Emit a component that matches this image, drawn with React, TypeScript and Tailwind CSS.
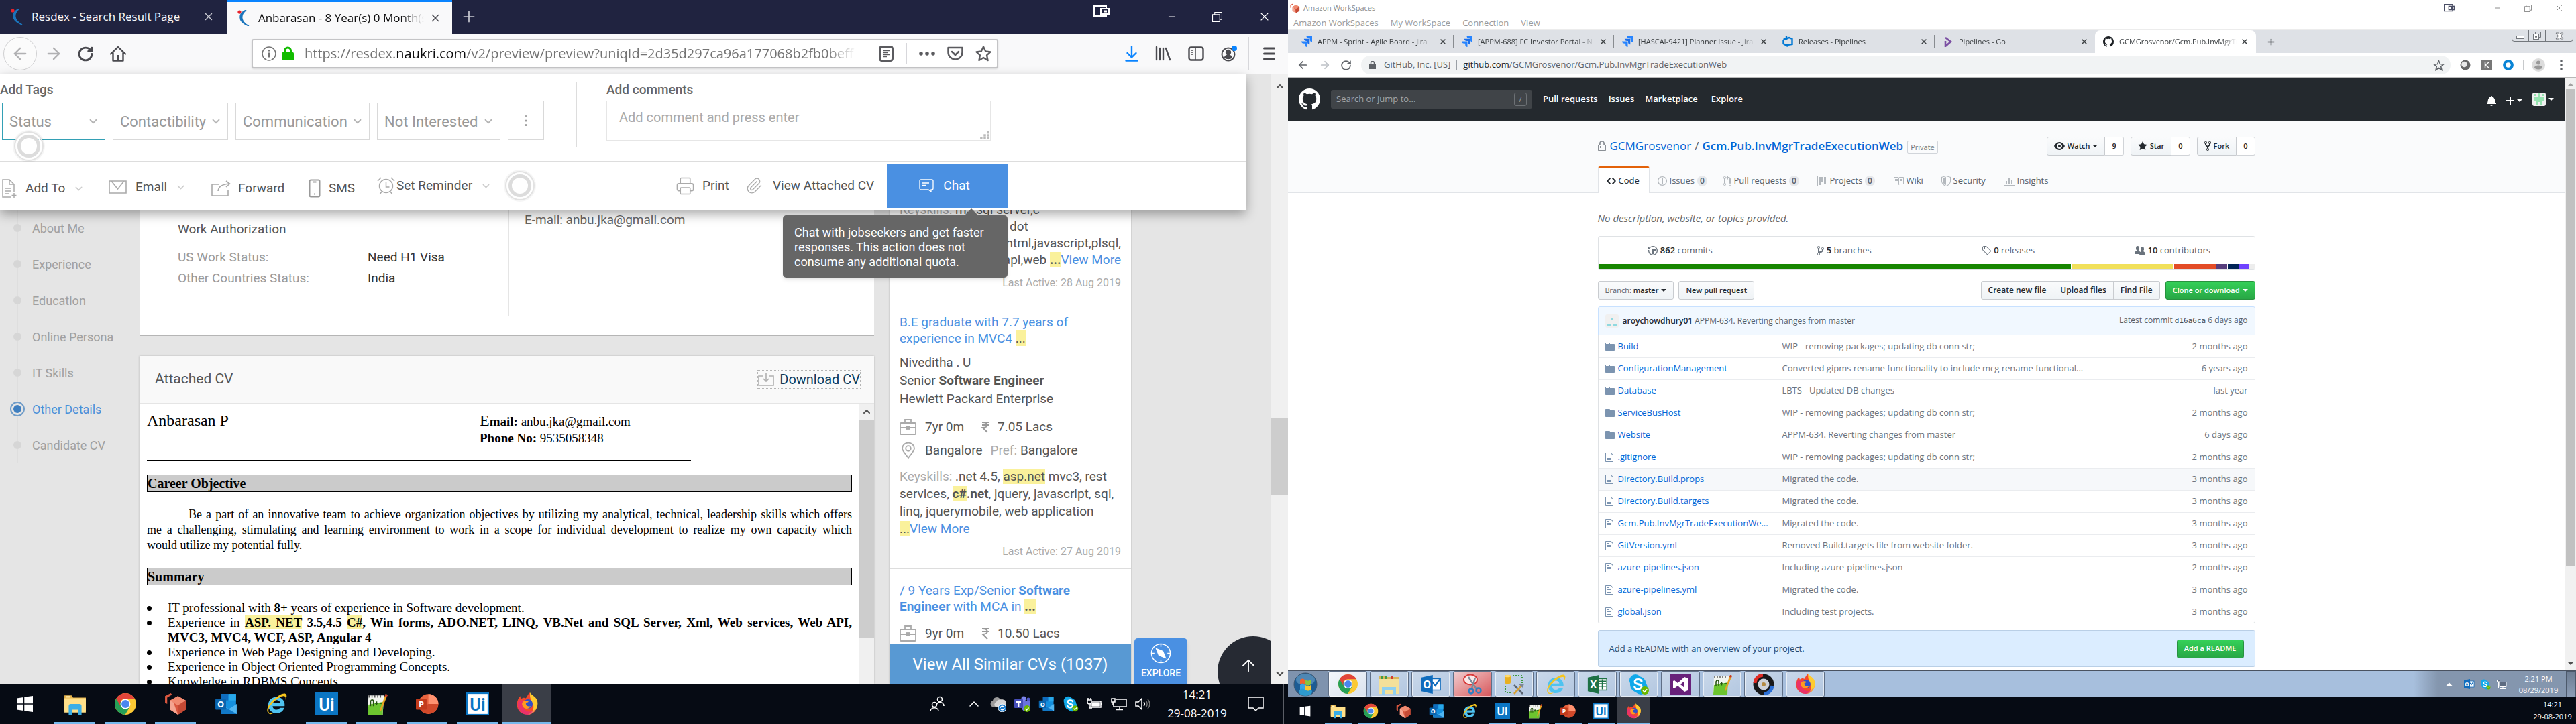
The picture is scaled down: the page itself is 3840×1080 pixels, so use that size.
import type { ReactNode } from "react";
import {
  ArrowLeft,
  ArrowRight,
  ArrowUp,
  ChevronDown,
  ChevronUp,
  Minus,
  MoreVertical,
  Paperclip,
  Plus,
  Printer,
  RotateCw,
  X,
} from "lucide-react";

/* ------------------------------------------------------------------ */
/* Shared drawings                                                     */
/* ------------------------------------------------------------------ */

type IconProps = { className?: string };

function Windows10Logo({ className }: IconProps) {
  return (
    <svg viewBox="0 0 32 32" className={className} fill="#fff" aria-hidden="true">
      <path d="M4 7.500 14 6v9.300H4zM15.300 5.800 28 4v11.300H15.300zM4 16.700h10V26L4 24.500zM15.300 16.700H28V28l-12.700-1.800z" />
    </svg>
  );
}

function ExplorerIcon({ className }: IconProps) {
  return (
    <svg viewBox="0 0 32 32" className={className} aria-hidden="true">
      <path d="M1 4h10l2 3h18v19H1z" fill="#e8b64c" />
      <path d="M1 8h30v20H1z" fill="#ffe08a" />
      <path d="M3 5h6v2H3z" fill="#fff3c0" />
      <path d="M7 31V19a3 3 0 0 1 3-3h12a3 3 0 0 1 3 3v12h-5v-7h-8v7z" fill="#3aaee8" />
    </svg>
  );
}

function ChromeIcon({ className }: IconProps) {
  return (
    <svg viewBox="0 0 32 32" className={className} aria-hidden="true">
      <circle cx="16" cy="16" r="15" fill="#fbc934" />
      <path d="M16 16 3 8.500A15 15 0 0 0 15.500 31l7-11.500z" fill="#26a057" />
      <path d="M3 8.500A15 15 0 0 1 29 8.500H16a7.500 7.500 0 0 0-6.500 11.300z" fill="#e2453a" />
      <circle cx="16" cy="16" r="7" fill="#fff" />
      <circle cx="16" cy="16" r="5.600" fill="#4a86ee" />
    </svg>
  );
}

function WorkspacesIcon({ className }: IconProps) {
  return (
    <svg viewBox="0 0 32 32" className={className} aria-hidden="true">
      <path d="m19 5 11 6v13l-11 7-11-7V11z" fill="#d9573f" />
      <path d="m19 5 11 6-11 7-11-7z" fill="#f08a70" />
      <path d="m19 18 11-7v13l-11 7z" fill="#c54a35" />
      <path d="m8 11 5 3 6 17-11-7z" fill="#f4a591" />
      <path d="M1 5 9 1l2 2-7 4v9l-3-2z" fill="#d9573f" />
    </svg>
  );
}

function OutlookIcon({ className }: IconProps) {
  return (
    <svg viewBox="0 0 32 32" className={className} aria-hidden="true">
      <path d="M9 2h21v26H9z" fill="#1490df" />
      <path d="M9 2h10v9H9z" fill="#0f6cbd" />
      <path d="M20 2h10v9H20z" fill="#28a8ea" />
      <path d="m9 17 11 6 11-7v14H9z" fill="#50b6f2" />
      <path d="m9 17 22 13H9z" fill="#1179c8" />
      <rect x="1" y="9" width="15" height="15" rx="1" fill="#0a64ad" />
      <text x="8.500" y="21" fontSize="12" fontWeight="700" textAnchor="middle" fill="#fff" fontFamily="Open Sans, sans-serif">
        O
      </text>
    </svg>
  );
}

function InternetExplorerIcon({ className }: IconProps) {
  return (
    <svg viewBox="0 0 32 32" className={className} aria-hidden="true">
      <path d="M27.500 19H10.800c.2 3 2.300 5 5.400 5 2.300 0 4-1 4.800-2.500h6C25.600 26.300 21.600 29 16.200 29 9.400 29 4.600 24.200 4.600 17.400 4.600 10.600 9.600 6 16.200 6c6.900 0 11.500 4.700 11.500 11.500zm-6.100-4.300c-.3-2.600-2.300-4.200-5.100-4.200-2.900 0-4.900 1.600-5.400 4.200z" fill="#4fc3f0" />
      <path d="M4 28c-3-4 2-13 9-19C20 3 28-1 30 3c1 2 0 5-1 7 0-3 0-5-3-5C20 5 3 19 5 27c1 3 5 2 8 1-4 3-7 3-9 0z" fill="#f6c51d" />
    </svg>
  );
}

function UiPathIcon({ className, inverse }: IconProps & { inverse?: boolean }) {
  return (
    <svg viewBox="0 0 32 32" className={className} aria-hidden="true">
      <rect x="1" y="1" width="30" height="30" fill={inverse ? "#fff" : "#0b76c4"} stroke="#0b76c4" strokeWidth="2" />
      <text x="16" y="25" fontSize="24" fontWeight="600" textAnchor="middle" fill={inverse ? "#0b76c4" : "#fff"} fontFamily="Roboto, sans-serif">
        Ui
      </text>
    </svg>
  );
}

function NotepadIcon({ className }: IconProps) {
  return (
    <svg viewBox="0 0 32 32" className={className} aria-hidden="true">
      <path d="M4 4h22l-2 27H3z" fill="#f2f5ef" />
      <path d="M4 17 25 13l-1 18H3z" fill="#6cc52f" />
      <path d="M5 3v4M9 3v4M13 3v4M17 3v4M21 3v4" stroke="#555" strokeWidth="1.400" />
      <path d="M7 19v-7c1-3 4-2 4 0v7m2-4h5m-2.500-2.500v5m4-2.500h4" stroke="#24530f" strokeWidth="1.500" fill="none" />
      <path d="m28 2 3 1-9 22-2 2v-3z" fill="#e8a321" />
      <path d="m28 2 3 1-1 3-3-1z" fill="#c2342b" />
    </svg>
  );
}

function PowerPointIcon({ className }: IconProps) {
  return (
    <svg viewBox="0 0 32 32" className={className} aria-hidden="true">
      <circle cx="17.500" cy="16" r="14" fill="#e8643f" />
      <path d="M17.500 2a14 14 0 0 1 14 14h-14z" fill="#ff9270" />
      <path d="M31.500 16a14 14 0 0 1-26.500 6l12.500-6z" fill="#d1492a" />
      <rect x="0" y="9" width="15" height="15" rx="1" fill="#c23b1c" />
      <text x="7.500" y="21" fontSize="12" fontWeight="700" textAnchor="middle" fill="#fff" fontFamily="Open Sans, sans-serif">
        P
      </text>
    </svg>
  );
}

function FirefoxIcon({ className }: IconProps) {
  return (
    <svg viewBox="0 0 32 32" className={className} aria-hidden="true">
      <path d="M16 31C8 31 1.500 25 1.500 17 1.500 12 4 7 6 5l1 4c3-2 5-2 7-1l5-8c2 4 7 5 9.500 10 4.500 10-2 21-12.500 21z" fill="#f5482c" />
      <path d="M20 0c2 4 7 5 9.500 10C33 19 27 30 17 31c7-3 9-9 7-15-2-4-5-8-4-16z" fill="#ffcb2e" />
      <path d="M4 10c-4 8 0 20 12 21 6 0 10-4 11-8-3 5-12 5-15 0-3-4-1-9 2-11-4-2-8 0-10-2z" fill="#e0219a" opacity=".55" />
      <circle cx="17" cy="16" r="6.500" fill="#2f52c9" />
      <path d="M9 14c2-3 6-3 9-1l-4 2c0 4 4 5 7 4-2 4-8 5-11 1-1-2-2-4-1-6z" fill="#ff9a1f" />
    </svg>
  );
}

function SkypeIcon({ className }: IconProps) {
  return (
    <svg viewBox="0 0 32 32" className={className} aria-hidden="true">
      <circle cx="11" cy="10" r="9" fill="#11a9ea" />
      <circle cx="19" cy="21" r="10" fill="#11a9ea" />
      <circle cx="15" cy="16" r="12" fill="#11a9ea" />
      <path d="M20 11c-1-2-3-2.500-5-2.500-3 0-5 1.500-5 3.600 0 5 10 2.400 10 7 0 2.200-2 3.900-5 3.900-2.600 0-4.700-1-5.300-3.400" stroke="#fff" strokeWidth="3" fill="none" strokeLinecap="round" />
      <circle cx="25" cy="25" r="6" fill="#6bb700" />
      <path d="m22 25 2.300 2.300 4-4" stroke="#fff" strokeWidth="1.600" fill="none" />
    </svg>
  );
}

function TriangleDown({ className }: IconProps) {
  return (
    <svg viewBox="0 0 8 4" className={className} fill="currentColor" aria-hidden="true">
      <path d="M0 0h8L4 4z" />
    </svg>
  );
}

function NaukriFavicon({ className }: IconProps) {
  return (
    <svg viewBox="0 0 20 24" className={className} aria-hidden="true">
      <path d="M13 0C4 7 4 17 17 24 9 21 4 17 4 11 4 6 8 2 13 0z" fill="#1b75bc" stroke="#1b75bc" strokeWidth="1.500" />
      <circle cx="3" cy="3" r="2.600" fill="#e8222a" />
    </svg>
  );
}

function TabletModeIcon({ className }: IconProps) {
  return (
    <svg viewBox="0 0 24 18" className={className} fill="none" stroke="currentColor" strokeWidth="2" aria-hidden="true">
      <path d="M19 4V1H1v15h18v-2" />
      <rect x="11" y="5" width="12" height="8" />
      <rect x="16" y="7.500" width="4" height="3" fill="currentColor" stroke="none" />
    </svg>
  );
}

function RestoreIcon({ className }: IconProps) {
  return (
    <svg viewBox="0 0 14 14" className={className} fill="none" stroke="currentColor" aria-hidden="true">
      <path d="M.5 3.500h10v10H.5zM3.500 3.500v-3h10v10h-3" />
    </svg>
  );
}

/* ------------------------------------------------------------------ */
/* Taskbar data shared by both monitors                                */
/* ------------------------------------------------------------------ */

type TaskItem = { label: string; draw: (cls: string) => ReactNode; open: boolean; active?: boolean };

const taskItems: TaskItem[] = [
  { label: "File Explorer", draw: (c) => <ExplorerIcon className={c} />, open: true },
  { label: "Chrome", draw: (c) => <ChromeIcon className={c} />, open: true },
  { label: "WorkSpaces", draw: (c) => <WorkspacesIcon className={c} />, open: true },
  { label: "Outlook", draw: (c) => <OutlookIcon className={c} />, open: false },
  { label: "Internet Explorer", draw: (c) => <InternetExplorerIcon className={c} />, open: false },
  { label: "UiPath Studio", draw: (c) => <UiPathIcon className={c} />, open: true },
  { label: "Notepad++", draw: (c) => <NotepadIcon className={c} />, open: true },
  { label: "PowerPoint", draw: (c) => <PowerPointIcon className={c} />, open: true },
  { label: "UiPath Robot", draw: (c) => <UiPathIcon className={c} inverse />, open: true },
  { label: "Firefox", draw: (c) => <FirefoxIcon className={c} />, open: true, active: true },
];

/* ------------------------------------------------------------------ */
/* Left monitor: Firefox                                               */
/* ------------------------------------------------------------------ */

function FirefoxTitleBar() {
  return (
    <div className="flex h-[50px] shrink-0 items-stretch bg-[#202340] text-[17px] text-[#f9f9fa]">
      <div className="flex w-[338px] items-center pl-4 pr-[18px]">
        <NaukriFavicon className="h-6 w-5" />
        <span className="ml-[11px] flex-1 whitespace-nowrap">Resdex - Search Result Page</span>
        <button aria-label="Close tab"><X className="size-[18px] text-[#c8c9d1]" strokeWidth={2} /></button>
      </div>
      <div className="flex w-[336px] items-center border-t-[3px] border-[#0a84ff] bg-[#f9f9fa] pl-4 pr-4 text-[#0c0c0d]">
        <NaukriFavicon className="h-6 w-5" />
        <span className="ml-[11px] w-[248px] overflow-hidden whitespace-nowrap [mask-image:linear-gradient(to_right,black_86%,transparent)]">
          Anbarasan - 8 Year(s) 0 Month(s)
        </span>
        <button aria-label="Close tab" className="ml-2"><X className="size-[18px] text-[#4a4a4f]" strokeWidth={2} /></button>
      </div>
      <button aria-label="New tab" className="ml-3 self-center"><Plus className="size-[26px] text-[#c8c9d1]" strokeWidth={1.6} /></button>
      <div className="ml-auto flex items-center pr-[25px] text-white">
        <TabletModeIcon className="mb-4 mr-[85px] h-[18px] w-6" />
        <button aria-label="Minimize" className="mr-[52px]"><Minus className="size-4" strokeWidth={1.5} /></button>
        <button aria-label="Restore" className="mr-[53px]"><RestoreIcon className="size-[15px]" /></button>
        <button aria-label="Close"><X className="size-[20px]" strokeWidth={1.3} /></button>
      </div>
    </div>
  );
}

function FirefoxToolbar() {
  return (
    <div className="flex h-[61px] shrink-0 items-center border-b border-[#dcdcde] bg-[#f9f9fa] text-[#4a4a4f]">
      <button aria-label="Back" className="ml-[5px] flex size-[50px] items-center justify-center rounded-full border border-[#cfcfd1] bg-[#fbfbfb]">
        <ArrowLeft className="size-7 text-[#b1b1b3]" strokeWidth={2} />
      </button>
      <button aria-label="Forward" className="ml-[11px]"><ArrowRight className="size-7 text-[#b1b1b3]" strokeWidth={2} /></button>
      <button aria-label="Reload" className="ml-[21px]"><RotateCw className="size-[25px]" strokeWidth={2.8} /></button>
      <button aria-label="Home" className="ml-6">
        <svg viewBox="0 0 24 24" className="size-6" fill="none" stroke="currentColor" strokeWidth="2.400" aria-hidden="true">
          <path d="M1 12.500 12 2l11 10.500M4.500 11v11.500h15V11" strokeLinejoin="round" strokeLinecap="round" />
          <rect x="10" y="14" width="4" height="8" fill="currentColor" stroke="none" />
        </svg>
      </button>
      <div className="ml-[187px] flex h-11 flex-1 items-center rounded-[3px] border-2 border-[#c4c4c6] bg-white pr-2 shadow-sm">
        <svg viewBox="0 0 22 22" className="ml-[13px] size-[22px] shrink-0" fill="none" stroke="#737373" strokeWidth="1.500" aria-hidden="true">
          <circle cx="11" cy="11" r="10" />
          <path d="M11 9.500v7M11 5v2.400" strokeWidth="2.400" />
        </svg>
        <svg viewBox="0 0 18 22" className="ml-2 h-[22px] w-[18px] shrink-0" aria-hidden="true">
          <rect y="9" width="18" height="12" rx="1.500" fill="#12bc00" />
          <path d="M4.500 10V6.500a4.500 4.500 0 0 1 9 0V10" fill="none" stroke="#12bc00" strokeWidth="3" />
        </svg>
        <div role="textbox" aria-label="Address" className="ml-4 w-[822px] overflow-hidden whitespace-nowrap text-[20px] leading-7 text-[#737373] [mask-image:linear-gradient(to_right,black_95%,transparent)]">
          https://resdex.<span className="text-[#0c0c0d]">naukri.com</span>/v2/preview/preview?uniqId=2d35d297ca96a177068b2fb0beff
        </div>
        <div className="ml-auto flex items-center text-[#5b5b5f]">
          <button aria-label="Reader view">
            <svg viewBox="0 0 22 24" className="h-6 w-[22px]" fill="none" stroke="currentColor" aria-hidden="true">
              <rect x="1.500" y="1.500" width="19" height="21" rx="3" strokeWidth="3" />
              <path d="M6 7.500h10M6 10.500h8M6 13.500h10M6 16.500h6" strokeWidth="1.400" />
            </svg>
          </button>
          <span className="ml-[19px] h-8 w-px bg-[#d7d7db]" />
          <svg viewBox="0 0 24 6" className="ml-[18px] h-1.5 w-6" fill="currentColor" aria-hidden="true">
            <circle cx="3" cy="3" r="2.800" /><circle cx="12" cy="3" r="2.800" /><circle cx="21" cy="3" r="2.800" />
          </svg>
          <svg viewBox="0 0 24 22" className="ml-[18px] h-[22px] w-6" fill="none" stroke="currentColor" strokeWidth="2.500" strokeLinecap="round" strokeLinejoin="round" aria-hidden="true">
            <path d="M1.500 2h21v7a10.500 10.500 0 0 1-21 0z" /><path d="m7 8 5 5 5-5" />
          </svg>
          <svg viewBox="0 0 24 24" className="ml-[18px] size-6" fill="none" stroke="currentColor" strokeWidth="2.300" strokeLinejoin="round" aria-hidden="true">
            <path d="m12 1.500 3.200 7 7.300.8-5.500 5 1.600 7.700L12 18l-6.600 4L7 14.300l-5.500-5 7.300-.8z" />
          </svg>
        </div>
      </div>
      <div className="ml-[189px] flex items-center gap-[25px] pr-[19px]">
        <svg viewBox="0 0 20 24" className="h-6 w-5" fill="none" stroke="#0a84ff" strokeWidth="2.400" strokeLinecap="round" aria-hidden="true">
          <path d="M10 1v16M3.500 11l6.500 6.500 6.500-6.500M1.500 22.500h17" />
        </svg>
        <svg viewBox="0 0 24 22" className="h-[22px] w-6" fill="none" stroke="currentColor" strokeWidth="2.400" strokeLinecap="round" aria-hidden="true">
          <path d="M2 1v19M7 3v17M12 3v17M16 3l6 17" />
        </svg>
        <svg viewBox="0 0 24 22" className="h-[22px] w-6" fill="none" stroke="currentColor" strokeWidth="2.400" aria-hidden="true">
          <rect x="1.500" y="1.500" width="21" height="19" rx="3" />
          <path d="M11 2v18M4.500 6h3.500M4.500 9h3.500M4.500 12h3.500" strokeWidth="1.500" />
        </svg>
        <svg viewBox="0 0 24 24" className="size-6" aria-hidden="true">
          <circle cx="11" cy="13" r="9.500" fill="none" stroke="#4a4a4f" strokeWidth="2" />
          <circle cx="11" cy="10" r="4.200" fill="#4a4a4f" />
          <path d="M5 18c0-6 12-6 12 0-3 3-9 3-12 0z" fill="#4a4a4f" />
          <circle cx="20" cy="4" r="4" fill="#0a84ff" />
        </svg>
        <span className="-ml-2 h-[50px] w-px bg-[#d7d7db]" />
        <svg viewBox="0 0 18 20" className="-ml-1 h-5 w-[18px]" stroke="currentColor" strokeWidth="3" strokeLinecap="round" aria-hidden="true">
          <path d="M1.500 2h15M1.500 10h15M1.500 18h15" />
        </svg>
      </div>
    </div>
  );
}

function PulseRing({ className }: IconProps) {
  return (
    <svg viewBox="0 0 50 50" className={className} fill="none" aria-hidden="true">
      <circle cx="25" cy="25" r="24" fill="#000" opacity=".04" />
      <circle cx="25" cy="25" r="21" stroke="#e2e2e2" strokeWidth="2" />
      <circle cx="25" cy="25" r="18.500" stroke="#fff" strokeWidth="2.500" />
      <circle cx="25" cy="25" r="14.500" stroke="#dcdcdc" strokeWidth="5" fill="#fff" />
    </svg>
  );
}

function TagSelect({ label, className }: { label: string; className: string }) {
  return (
    <span className={className}>
      <select aria-label={label} className="h-full w-full appearance-none bg-transparent pl-2.5 text-[22px] text-[#999] outline-none">
        <option>{label}</option>
      </select>
      <ChevronDown className="pointer-events-none absolute right-2 top-1/2 size-[18px] -translate-y-1/2 text-[#b5b5b5]" strokeWidth={2.4} />
    </span>
  );
}

const grip = [
  [12, 0], [6, 5], [12, 5], [0, 10], [6, 10], [12, 10],
];

function CandidateHeader() {
  return (
    <header className="relative z-10 mr-[38px] bg-white shadow-[0_6px_16px_rgba(0,0,0,0.35)]">
      <div className="flex h-[130px] border-b border-[#ddd] pt-[11px]">
        <div>
          <h2 className="text-[19px] font-medium leading-6 text-[#666]">Add Tags</h2>
          <div className="ml-[3px] mt-1 flex items-end gap-[11px]">
            <TagSelect label="Status" className="relative h-14 w-[154px] border border-[#33a0b5]" />
            <TagSelect label="Contactibility" className="relative h-14 w-[172px] border border-[#d9d9d9]" />
            <TagSelect label="Communication" className="relative h-14 w-[200px] border border-[#d9d9d9]" />
            <TagSelect label="Not Interested" className="relative h-14 w-[184px] border border-[#d9d9d9]" />
            <button aria-label="More tags" className="flex h-[59px] w-[54px] items-center justify-center border border-[#d9d9d9]">
              <MoreVertical className="size-[22px] text-[#999]" strokeWidth={1.3} />
            </button>
          </div>
        </div>
        <div className="ml-[47px] h-[98px] w-0.5 bg-[#ddd]" />
        <div className="ml-11">
          <label htmlFor="comments" className="block text-[19px] font-medium leading-6 text-[#666]">Add comments</label>
          <span className="relative mt-1 block h-[60px] w-[573px]">
            <textarea
              id="comments"
              placeholder="Add comment and press enter"
              className="block h-full w-full resize-none overflow-hidden border border-[#e6e6e6] px-[18px] py-3 text-[20px] leading-6 placeholder:text-[#aaa]"
            />
            <svg viewBox="0 0 16 14" className="absolute bottom-0.5 right-0.5 h-3 w-3.5" fill="#bbb" aria-hidden="true">
              {grip.map(([x, y]) => <rect key={x + "-" + y} x={x} y={y} width="4" height="4" />)}
            </svg>
          </span>
        </div>
      </div>
      <PulseRing className="absolute left-[18px] top-[82px] size-[50px]" />
      <div className="flex h-[72px] items-center text-[19px] text-[#555]">
        <button aria-haspopup="menu" className="ml-[3px] flex w-[159px] items-center pt-2">
          <svg viewBox="0 0 22 28" className="h-7 w-[22px]" fill="none" stroke="#aaa" strokeWidth="1.500" aria-hidden="true">
            <path d="M14 27H1V1h10l7 7v12M11 1v7h7M5 14h9M5 18h9M5 22h6M18 21v7M14.500 24.500h7" />
          </svg>
          <span className="ml-[13px]">Add To</span>
          <ChevronDown className="ml-3 size-[17px] text-[#ccc]" />
        </button>
        <button aria-haspopup="menu" className="flex w-[153px] items-center pt-1">
          <svg viewBox="0 0 27 20" className="h-5 w-[27px]" fill="none" stroke="#aaa" strokeWidth="1.600" aria-hidden="true">
            <path d="M1 1h25v18H1zM4 1l9.500 12L23 1" />
          </svg>
          <span className="ml-[13px]">Email</span>
          <ChevronDown className="ml-3 size-[17px] text-[#ccc]" />
        </button>
        <button className="flex w-[145px] items-center pt-2">
          <svg viewBox="0 0 29 24" className="h-6 w-[29px]" fill="none" stroke="#aaa" strokeWidth="1.600" aria-hidden="true">
            <path d="M11 6H1v17h24v-8M10 16c1-7 6-10 17-11M22 1l5.500 4-5.500 5" />
          </svg>
          <span className="ml-[11px]">Forward</span>
        </button>
        <button className="flex w-[102px] items-center pt-2">
          <svg viewBox="0 0 18 28" className="h-7 w-[18px]" fill="none" stroke="#999" strokeWidth="2" aria-hidden="true">
            <rect x="1.500" y="1.500" width="15" height="25" rx="2" /><path d="M6.500 4.500h5M8 22.500h2" />
          </svg>
          <span className="ml-3">SMS</span>
        </button>
        <button aria-haspopup="menu" className="flex w-[188px] items-center">
          <svg viewBox="0 0 27 27" className="size-[27px]" fill="none" stroke="#aaa" strokeWidth="1.500" aria-hidden="true">
            <circle cx="13.500" cy="13.500" r="10" /><path d="M13.500 7v8h5M1 6l5-5M26 6l-5-5M7 22l-3 4M20 22l3 4" />
          </svg>
          <span className="ml-0.5">Set Reminder</span>
          <ChevronDown className="ml-3 size-[17px] text-[#ccc]" />
        </button>
        <PulseRing className="size-[50px]" />
        <button className="ml-auto flex w-[104px] items-center">
          <Printer className="size-[29px] text-[#aaa]" strokeWidth={1.3} />
          <span className="ml-[11px]">Print</span>
        </button>
        <button className="flex w-[211px] items-center">
          <Paperclip className="size-[26px] text-[#aaa]" strokeWidth={1.3} />
          <span className="ml-[15px] whitespace-nowrap">View Attached CV</span>
        </button>
        <div className="relative mr-[355px]">
          <button aria-describedby="chat-tip" className="flex h-[66px] w-[180px] items-center justify-center bg-[#4a90e2] text-white">
            <svg viewBox="0 0 22 20" className="h-5 w-[22px]" fill="none" stroke="currentColor" strokeWidth="1.300" aria-hidden="true">
              <path d="M3 1h16a2 2 0 0 1 2 2v11a2 2 0 0 1-2 2h-1v3l-4-3H3a2 2 0 0 1-2-2V3a2 2 0 0 1 2-2zM5 6h10M5 9.500h6" />
            </svg>
            <span className="ml-[14px] mr-2">Chat</span>
          </button>
          <div id="chat-tip" role="tooltip" className="absolute right-0 top-[77px] w-[335px] rounded-[5px] bg-[#666] px-[17px] pb-3 pt-[15px] text-[18px] leading-[22px] text-white shadow-md">
            <svg viewBox="0 0 20 10" className="absolute -top-2.5 right-11 h-2.5 w-5" fill="#666" aria-hidden="true"><path d="M10 0 20 10H0z" /></svg>
            <p>Chat with jobseekers and get faster responses. This action does not consume any additional quota.</p>
          </div>
        </div>
      </div>
    </header>
  );
}

const sections = ["About Me", "Experience", "Education", "Online Persona", "IT Skills", "Other Details", "Candidate CV"];

function SectionNav() {
  return (
    <nav className="w-52 shrink-0 text-[18px]">
      <ul>
        {sections.map((s) => {
          const active = s === "Other Details";
          return (
            <li key={s} className="flex h-[54px] items-center pl-[15px]">
              <span className="flex h-full w-[22px] flex-col items-center">
                <span className="w-px flex-1 bg-[#dedede]" />
                {active ? (
                  <span className="flex size-[22px] items-center justify-center rounded-full border-2 border-[#6f9cc8]">
                    <span className="size-3 rounded-full bg-[#3f7fc0]" />
                  </span>
                ) : (
                  <span className="size-3 rounded-full bg-[#d6d6d6]" />
                )}
                <span className="w-px flex-1 bg-[#dedede]" />
              </span>
              <a href="#section" className={active ? "ml-[11px] text-[#4a90d9]" : "ml-[11px] text-[#a0a0a0]"}>{s}</a>
            </li>
          );
        })}
      </ul>
    </nav>
  );
}

const Mark = ({ children }: { children: ReactNode }) => <mark className="bg-[#faf19b] text-inherit">{children}</mark>;

function Bullet({ children }: { children: ReactNode }) {
  return (
    <li className="flex">
      <span className="mt-2 h-[7px] w-[7px] shrink-0 rounded-full bg-black" />
      <div className="ml-6 flex-1">{children}</div>
    </li>
  );
}

function AttachedCv() {
  return (
    <section className="mt-[30px] flex min-h-0 flex-1 flex-col bg-white shadow-[0_0_3px_rgba(0,0,0,0.2)]">
      <div className="flex h-[71px] shrink-0 items-center border-b border-[#e5e5e5] bg-[#f9f9f9] pl-[23px] pr-5 text-[21px] text-[#555]">
        <h2>Attached CV</h2>
        <a href="#download" className="ml-auto flex h-7 items-center border border-dotted border-[#b5b5b5] text-[20px] text-[#0b3a5c]">
          <svg viewBox="0 0 24 20" className="mr-2 h-5 w-6" fill="none" stroke="#b0b0b0" strokeWidth="1.600" aria-hidden="true">
            <path d="M7 5H1v14h22V5h-6M12 0v12M8 9l4 4 4-4" />
          </svg>
          Download CV
        </a>
      </div>
      <div className="flex min-h-0 flex-1">
        <article className="min-w-0 flex-1 overflow-hidden px-[11px] pt-[13px] text-[19px] leading-[23px] text-black [font-family:'Liberation_Serif',serif]">
          <div className="flex leading-[25px]">
            <p className="w-[496px] text-[24px]">Anbarasan P</p>
            <div>
              <p className="leading-[25px]"><span className="text-[24px]">E</span><b>mail:</b> anbu.jka@gmail.com</p>
              <p className="leading-[25px]"><b>Phone No:</b> 9535058348</p>
            </div>
          </div>
          <div className="mt-5 h-0.5 w-[811px] bg-black" />
          <h3 className="mt-5 border border-black bg-[#cbcbcb] text-[20px] font-bold leading-6">Career Objective</h3>
          <p className="mt-[22px] text-[18px]">
            <span className="block pl-[62px] [text-align-last:justify]">
              Be a part of an innovative team to achieve organization objectives by utilizing my analytical, technical, leadership skills which offers
            </span>
            <span className="block [text-align-last:justify]">
              me a challenging, stimulating and learning environment to work in a scope for individual development to realize my own capacity which
            </span>
            <span className="block">would utilize my potential fully.</span>
          </p>
          <h3 className="mt-[22px] border border-black bg-[#cbcbcb] text-[20px] font-bold leading-6">Summary</h3>
          <ul className="mt-[23px] text-justify leading-[22px]">
            <Bullet>IT professional with <b>8</b>+ years of experience in Software development.</Bullet>
            <Bullet>
              Experience in <b><Mark>ASP. NET</Mark> 3.5,4.5 <Mark>C#</Mark>, Win forms, ADO.NET, LINQ, VB.Net and SQL Server, Xml, Web services, Web API, MVC3, MVC4, WCF, ASP, Angular 4</b>
            </Bullet>
            <Bullet>Experience in Web Page Designing and Developing.</Bullet>
            <Bullet>Experience in Object Oriented Programming Concepts.</Bullet>
            <Bullet>Knowledge in RDBMS Concepts.</Bullet>
          </ul>
        </article>
        <div className="flex w-[22px] flex-col items-center bg-[#f0f0f0]">
          <ChevronUp className="my-1 size-4 shrink-0 text-[#505050]" strokeWidth={3} />
          <div className="h-[326px] w-full bg-[#cdcdcd]" />
        </div>
      </div>
    </section>
  );
}

function Briefcase() {
  return (
    <svg viewBox="0 0 25 24" className="h-6 w-[25px]" fill="none" stroke="#aaa" strokeWidth="1.800" aria-hidden="true">
      <rect x="1" y="6" width="23" height="17" rx="1" /><path d="M8 6V1h9v5M1 13h23" /><rect x="10" y="11" width="5" height="4" fill="#aaa" />
    </svg>
  );
}

function Rupee() {
  return (
    <svg viewBox="0 0 12 18" className="h-[18px] w-3" fill="none" stroke="#999" strokeWidth="2" aria-hidden="true">
      <path d="M1 2h10M1 6h10M2 2c9 0 9 8 0 8l7 7" />
    </svg>
  );
}

function SimilarProfiles() {
  return (
    <aside className="ml-[23px] flex w-[360px] shrink-0 flex-col bg-white text-[19px] text-[#555] shadow-[0_0_2px_rgba(0,0,0,0.25)]">
      <div className="min-h-0 flex-1 overflow-hidden">
        <section className="-mt-[13px] border-b border-[#ddd] px-[15px] pb-[15px] leading-[25px]">
          <p className="whitespace-nowrap"><span className="text-[#aaa]">Keyskills:</span> ms sql server,c</p>
          <p className="pl-[164px]">dot</p>
          <p className="text-right">html,javascript,plsql,</p>
          <p className="text-right">api,web <Mark><b>...</b></Mark><a href="#more" className="text-[#4a90e2]">View More</a></p>
          <p className="mt-3 text-right text-[16px] leading-5 text-[#aaa]">Last Active: 28 Aug 2019</p>
        </section>
        <section className="border-b border-[#ddd] px-[15px] pb-[15px] pt-[21px]">
          <h3 className="leading-6 text-[#4a90e2]">
            <a href="#profile">B.E graduate with 7.7 years of<br />experience in MVC4 <Mark><span className="text-[#555]">...</span></Mark></a>
          </h3>
          <div className="mt-2.5 leading-[27px]">
            <p>Niveditha . U</p>
            <p>Senior <b>Software Engineer</b></p>
            <p>Hewlett Packard Enterprise</p>
          </div>
          <div className="mt-4 flex h-[26px] items-center">
            <Briefcase /><span className="ml-[13px] w-[84px]">7yr 0m</span><Rupee /><span className="ml-3">7.05 Lacs</span>
          </div>
          <div className="mt-[9px] flex h-[26px] items-center">
            <svg viewBox="0 0 20 24" className="ml-[3px] h-6 w-5" fill="none" stroke="#aaa" strokeWidth="1.800" aria-hidden="true">
              <path d="M10 23C4 15 1 12 1 9a9 8.500 0 0 1 18 0c0 3-3 6-9 14z" /><circle cx="10" cy="9" r="3.800" />
            </svg>
            <span className="ml-[15px]">Bangalore</span><span className="ml-3 text-[#aaa]">Pref:</span><span className="ml-[5px]">Bangalore</span>
          </div>
          <p className="mt-[13px] whitespace-nowrap leading-[26px]">
            <span className="text-[#aaa]">Keyskills:</span> .net 4.5, <Mark>asp.net</Mark> mvc3, rest<br />
            services, <b><Mark>c#</Mark>.net</b>, jquery, javascript, sql,<br />
            linq, jquerymobile, web application<br />
            <Mark>...</Mark><a href="#more" className="text-[#4a90e2]">View More</a>
          </p>
          <p className="mt-[11px] text-right text-[16px] leading-5 text-[#aaa]">Last Active: 27 Aug 2019</p>
        </section>
        <section className="px-[15px] pt-5">
          <h3 className="leading-6 text-[#4a90e2]">
            <a href="#profile">/ 9 Years Exp/Senior <b>Software<br />Engineer</b> with MCA in <Mark><b className="text-[#555]">...</b></Mark></a>
          </h3>
          <div className="mt-[15px] flex h-[26px] items-center">
            <Briefcase /><span className="ml-[13px] w-[84px]">9yr 0m</span><Rupee /><span className="ml-3">10.50 Lacs</span>
          </div>
        </section>
      </div>
      <button className="h-[59px] shrink-0 bg-[#5899d3] text-[24px] text-white">View All Similar CVs (1037)</button>
    </aside>
  );
}

function CandidatePage() {
  return (
    <div className="flex min-h-0 flex-1 bg-[#e5e5e5] [font-family:Roboto,sans-serif]">
      <div className="flex min-w-0 flex-1 flex-col">
        <CandidateHeader />
        <div className="flex min-h-0 flex-1">
          <SectionNav />
          <main className="flex min-w-0 flex-1 flex-col">
            <section className="flex h-[188px] shrink-0 border-b-2 border-[#b5b5b5] bg-white pl-[57px] text-[19px]">
              <div className="h-[158px] w-[494px] border-r-2 border-[#e5e5e5] pt-[17px]">
                <h2 className="leading-6 text-[#555]">Work Authorization</h2>
                <dl className="mt-[14px] grid grid-cols-[283px_1fr] leading-[31px]">
                  <dt className="text-[#999]">US Work Status:</dt>
                  <dd className="text-[#333]">Need H1 Visa</dd>
                  <dt className="text-[#999]">Other Countries Status:</dt>
                  <dd className="text-[#333]">India</dd>
                </dl>
              </div>
              <p className="pl-[23px] pt-[3px] leading-6 text-[#666]">E-mail: anbu.jka@gmail.com</p>
            </section>
            <AttachedCv />
          </main>
          <SimilarProfiles />
          <div className="flex w-[209px] shrink-0 items-end justify-between overflow-hidden pl-[5px]">
            <button className="flex h-[68px] w-[79px] flex-col items-center justify-center rounded-t-[5px] bg-[#4a90e2] text-[14px] font-medium leading-5 text-white shadow-md">
              <svg viewBox="0 0 32 32" className="mb-1 size-[31px]" fill="none" stroke="currentColor" strokeWidth="1.500" aria-hidden="true">
                <circle cx="16" cy="16" r="14.500" />
                <path d="M16 2v4M16 26v4M2 16h4M26 16h4" />
                <path d="m9 9 10 4 4 10-10-4z" fill="currentColor" />
              </svg>
              EXPLORE
            </button>
            <button aria-label="Back to top" className="h-[71px] w-20 overflow-hidden">
              <span className="flex size-[106px] items-center justify-start rounded-full bg-[#262a33] pb-[18px] pl-8">
                <ArrowUp className="size-7 text-white" strokeWidth={1.6} />
              </span>
            </button>
          </div>
        </div>
      </div>
      <div className="flex w-[25px] shrink-0 flex-col items-center bg-[#f0f0f0] py-1.5 text-[#505050]">
        <ChevronUp className="mt-1 size-4" strokeWidth={3} />
        <div className="mt-[486px] h-[116px] w-full bg-[#cdcdcd]" />
        <ChevronDown className="mt-auto size-[18px]" strokeWidth={3} />
      </div>
    </div>
  );
}

function PrimaryTaskbar() {
  return (
    <footer className="flex h-[60px] shrink-0 bg-[#060b14] text-[17px] text-white">
      <button aria-label="Start" className="flex w-[74px] items-center justify-center"><Windows10Logo className="size-[32px]" /></button>
      {taskItems.map((t) => (
        <button key={t.label} aria-label={t.label} className={t.active ? "flex w-[73px] flex-col items-center bg-[#3a3e47]" : "flex w-[75px] flex-col items-center"}>
          <span className="flex flex-1 items-center pt-[3px]">{t.draw("size-[34px]")}</span>
          <span className={t.active ? "h-[3px] w-full bg-[#76b9ed]" : t.open ? "h-[3px] w-[61px] bg-[#76b9ed]" : "h-[3px]"} />
        </button>
      ))}
      <div className="ml-auto flex items-center">
        <svg viewBox="0 0 24 24" className="size-6" fill="none" stroke="#fff" strokeWidth="1.600" aria-hidden="true">
          <circle cx="16" cy="5" r="3.500" /><path d="M11 14c0-6 11-6 11 1" /><circle cx="8" cy="13" r="3.500" /><path d="M2 23c0-7 12-7 12 0" />
        </svg>
        <ChevronUp className="ml-[31px] size-[24px]" strokeWidth={1.5} />
        <svg viewBox="0 0 24 24" className="ml-3 size-6" aria-hidden="true">
          <path d="M3 16a5 5 0 0 1 1-9 6 6 0 0 1 11-2 5 5 0 0 1 6 7v4z" fill="#9a9a9a" />
          <path d="M8 16a4 4 0 0 1 1-7 6 6 0 0 1 8-3 5 5 0 0 1 4 10z" fill="#d6d6d6" />
          <circle cx="18" cy="18" r="6" fill="#1f7fd0" stroke="#fff" />
          <path d="M15 18a3 3 0 0 1 5-2M21 18a3 3 0 0 1-5 2" stroke="#fff" strokeWidth="1.400" fill="none" />
        </svg>
        <svg viewBox="0 0 24 24" className="ml-3 size-6" aria-hidden="true">
          <circle cx="14" cy="4" r="3.500" fill="#7b83eb" /><circle cx="21" cy="5" r="2.500" fill="#5059c9" />
          <path d="M9 8h14v8a6 6 0 0 1-12 2z" fill="#6a72dc" /><rect y="5" width="13" height="13" rx="1" fill="#464eb8" />
          <path d="M3 9h7M6.500 9v7" stroke="#fff" strokeWidth="1.800" /><circle cx="19" cy="19" r="5" fill="#6bb700" /><path d="m16.500 19 2 2 3-3.500" stroke="#fff" fill="none" strokeWidth="1.300" />
        </svg>
        <OutlookIcon className="ml-3 size-6" />
        <SkypeIcon className="ml-3 size-6" />
        <svg viewBox="0 0 24 24" className="ml-3 size-6" fill="none" stroke="#fff" strokeWidth="1.500" aria-hidden="true">
          <path d="M8 8h13v9H6v-5M22 11v3" /><path d="M8 10h11v5H8z" fill="#fff" /><path d="M2 3v3M6 3v3M1 6h6v3a3 3 0 0 1-6 0zM4 12v6h4" />
        </svg>
        <svg viewBox="0 0 24 24" className="ml-3 size-6" fill="none" stroke="#fff" strokeWidth="1.500" aria-hidden="true">
          <path d="M7 5h16v11H4v-5M13 16v4M8 20.500h10" /><path d="M1 4h5v5H1zM3 9v4" />
        </svg>
        <svg viewBox="0 0 24 24" className="ml-3 size-6" fill="none" stroke="#fff" strokeWidth="1.500" aria-hidden="true">
          <path d="M1 9h4l5-5v16l-5-5H1z" /><path d="M13 9a4 4 0 0 1 0 6" /><path d="M16 7a7 7 0 0 1 0 10M19 5a10 10 0 0 1 0 14" stroke="#777" />
        </svg>
        <div className="ml-[21px] w-[95px] whitespace-nowrap text-center leading-7"><p>14:21</p><p>29-08-2019</p></div>
        <svg viewBox="0 0 24 24" className="ml-7 size-6" fill="none" stroke="#fff" strokeWidth="1.500" aria-hidden="true">
          <path d="M1 2h22v16h-7l-4 4-4-4H1z" />
        </svg>
        <span className="ml-[29px] mr-1.5 h-[60px] w-px bg-[#5a5e66]" />
      </div>
    </footer>
  );
}

/* ------------------------------------------------------------------ */
/* Right monitor: remote workspace with Chrome                         */
/* ------------------------------------------------------------------ */

type OctProps = { d: string; w?: number; className?: string };

function Oct({ d, w = 16, className }: OctProps) {
  return (
    <svg viewBox={"0 0 " + w + " 16"} width={w} height={16} className={className} fill="currentColor" fillRule="evenodd" aria-hidden="true">
      <path d={d} />
    </svg>
  );
}

const oct = {
  github: "M8 0C3.58 0 0 3.58 0 8c0 3.54 2.29 6.53 5.47 7.59.4.07.55-.17.55-.38 0-.19-.01-.82-.01-1.49-2.01.37-2.53-.49-2.69-.94-.09-.23-.48-.94-.82-1.13-.28-.15-.68-.52-.01-.53.63-.01 1.08.58 1.23.82.72 1.21 1.87.87 2.33.66.07-.52.28-.87.51-1.07-1.78-.2-3.64-.89-3.64-3.95 0-.87.31-1.59.82-2.15-.08-.2-.36-1.02.08-2.12 0 0 .67-.21 2.2.82.64-.18 1.32-.27 2-.27.68 0 1.36.09 2 .27 1.53-1.04 2.2-.82 2.2-.82.44 1.1.16 1.92.08 2.12.51.56.82 1.27.82 2.15 0 3.07-1.87 3.75-3.65 3.95.29.25.54.73.54 1.48 0 1.07-.01 1.93-.01 2.2 0 .21.15.46.55.38A8.013 8.013 0 0 0 16 8c0-4.42-3.58-8-8-8z",
  file: "M6 5H2V4h4v1zM2 8h7V7H2v1zm0 2h7V9H2v1zm0 2h7v-1H2v1zm10-7.5V14c0 .55-.45 1-1 1H1c-.55 0-1-.45-1-1V2c0-.55.45-1 1-1h7.5L12 4.5zM11 5L8 2H1v12h10V5z",
  dir: "M13 4H7V3c0-.66-.31-1-1-1H1c-.55 0-1 .45-1 1v10c0 .55.45 1 1 1h12c.55 0 1-.45 1-1V5c0-.55-.45-1-1-1zM6 4H1V3h5v1z",
  code: "M9.5 3L8 4.5 11.5 8 8 11.5 9.5 13 14 8 9.5 3zm-5 0L0 8l4.500 5L6 11.5 2.5 8 6 4.5 4.5 3z",
  issue: "M7 2.3c3.14 0 5.7 2.56 5.7 5.7s-2.56 5.7-5.7 5.7A5.71 5.71 0 0 1 1.3 8c0-3.14 2.56-5.7 5.7-5.7zM7 1C3.14 1 0 4.14 0 8s3.14 7 7 7 7-3.14 7-7-3.14-7-7-7zm1 3H6v5h2V4zm0 6H6v2h2v-2z",
  pr: "M11 11.28V5c-.03-.78-.34-1.47-.94-2.06C9.46 2.35 8.78 2.03 8 2H7V0L4 3l3 3V4h1c.27.02.48.11.69.31.21.2.3.42.31.69v6.28A1.993 1.993 0 0 0 10 15a1.993 1.993 0 0 0 1-3.72zm-1 2.92c-.66 0-1.2-.55-1.2-1.2 0-.65.55-1.2 1.2-1.2.65 0 1.2.55 1.2 1.2 0 .65-.55 1.2-1.2 1.2zM4 3c0-1.11-.89-2-2-2a1.993 1.993 0 0 0-1 3.72v6.56A1.993 1.993 0 0 0 2 15a1.993 1.993 0 0 0 1-3.72V4.72c.59-.34 1-.98 1-1.72zm-.8 10c0 .66-.55 1.2-1.2 1.2-.65 0-1.2-.55-1.2-1.2 0-.65.55-1.2 1.2-1.2.65 0 1.2.55 1.2 1.2zM2 4.2C1.34 4.2.8 3.65.8 3c0-.65.55-1.2 1.2-1.2.65 0 1.2.55 1.2 1.2 0 .65-.55 1.2-1.2 1.2z",
  project: "M10 12h3V2h-3v10zm-4-2h3V2H6v8zm-4 4h3V2H2v12zm-1 1h13V1H1v14zM14 0H1a1 1 0 0 0-1 1v14a1 1 0 0 0 1 1h13a1 1 0 0 0 1-1V1a1 1 0 0 0-1-1z",
  book: "M3 5h4v1H3V5zm0 3h4V7H3v1zm0 2h4V9H3v1zm11-5h-4v1h4V5zm0 2h-4v1h4V7zm0 2h-4v1h4V9zm2-6v9c0 .55-.45 1-1 1H9.5l-1 1-1-1H2c-.55 0-1-.45-1-1V3c0-.55.45-1 1-1h5.5l1 1 1-1H15c.55 0 1 .45 1 1zm-8 .5L7.5 3H2v9h6V3.5zm7-.5H9.5l-.5.5V12h6V3z",
  shield: "M0 2l7-2 7 2v6.02C14 12.69 8.69 16 7 16c-1.69 0-7-3.31-7-7.98V2zm1 .75L7 1l6 1.75v5.268C13 12.104 8.449 15 7 15c-1.449 0-6-2.896-6-6.982V2.75zm1 .75L7 2v12c-1.207 0-5-2.482-5-5.985V3.5z",
  graph: "M16 14v1H0V0h1v14h15zM5 13H3V8h2v5zm4 0H7V3h2v10zm4 0h-2V6h2v7z",
  eye: "M8.06 2C3 2 0 8 0 8s3 6 8.06 6C13 14 16 8 16 8s-3-6-7.940-6zM8 12c-2.2 0-4-1.78-4-4 0-2.2 1.8-4 4-4 2.22 0 4 1.8 4 4 0 2.22-1.78 4-4 4zm2-4c0 1.11-.89 2-2 2-1.110 0-2-.89-2-2 0-1.110.89-2 2-2 1.110 0 2 .89 2 2z",
  star: "M14 6l-4.9-.64L7 1 4.9 5.36 0 6l3.6 3.26L2.67 14 7 11.67 11.33 14l-.93-4.74L14 6z",
  fork: "M8 1a1.993 1.993 0 0 0-1 3.72V6L5 8 3 6V4.72A1.993 1.993 0 0 0 2 1a1.993 1.993 0 0 0-1 3.72V6.5l3 3v1.78A1.993 1.993 0 0 0 5 15a1.993 1.993 0 0 0 1-3.72V9.5l3-3V4.72A1.993 1.993 0 0 0 8 1zM2 4.2C1.34 4.2.8 3.65.8 3c0-.65.55-1.2 1.2-1.2.65 0 1.2.55 1.2 1.2 0 .65-.55 1.2-1.2 1.2zm3 10c-.66 0-1.2-.55-1.2-1.2 0-.65.55-1.2 1.2-1.2.65 0 1.2.55 1.2 1.2 0 .65-.55 1.2-1.2 1.2zm3-10c-.66 0-1.2-.55-1.2-1.2 0-.65.55-1.2 1.2-1.2.65 0 1.2.55 1.2 1.2 0 .65-.55 1.2-1.2 1.2z",
  lock: "M4 13H3v-1h1v1zm8-6v7c0 .55-.45 1-1 1H1c-.55 0-1-.45-1-1V7c0-.55.45-1 1-1h1V4c0-2.2 1.8-4 4-4s4 1.8 4 4v2h1c.55 0 1 .45 1 1zM3.8 6h4.410V4c0-1.22-.98-2.2-2.2-2.2-1.22 0-2.2.98-2.2 2.2v2H3.8zM11 7H2v7h9V7zM4 8H3v1h1V8zm0 2H3v1h1v-1z",
  history: "M8 13H6V6h5v2H8v5zM7 1C4.81 1 2.87 2.02 1.59 3.59L0 2v4h4L2.5 4.5C3.55 3.17 5.17 2.3 7 2.3c3.14 0 5.7 2.56 5.7 5.7s-2.56 5.7-5.7 5.7A5.71 5.71 0 0 1 1.3 8c0-.34.03-.67.09-1H.08C.03 7.33 0 7.66 0 8c0 3.86 3.14 7 7 7s7-3.14 7-7-3.14-7-7-7z",
  branch: "M10 5c0-1.11-.89-2-2-2a1.993 1.993 0 0 0-1 3.72v.3c-.02.52-.23.98-.63 1.38-.4.4-.86.61-1.38.63-.83.02-1.48.16-2 .45V4.72a1.993 1.993 0 0 0-1-3.72C.88 1 0 1.89 0 3a2 2 0 0 0 1 1.72v6.56c-.59.35-1 .99-1 1.72 0 1.11.89 2 2 2 1.11 0 2-.89 2-2 0-.53-.2-1-.53-1.36.09-.06.48-.41.59-.47.25-.11.56-.17.94-.17 1.05-.05 1.95-.45 2.75-1.25S8.95 7.77 9 6.73h-.02C9.59 6.37 10 5.73 10 5zM2 1.8c.66 0 1.2.55 1.2 1.2 0 .65-.55 1.2-1.2 1.2C1.35 4.2.8 3.65.8 3c0-.65.55-1.2 1.2-1.2zm0 12.41c-.66 0-1.2-.55-1.2-1.2 0-.65.55-1.2 1.2-1.2.65 0 1.2.55 1.2 1.2 0 .65-.55 1.2-1.2 1.2zm6-8c-.66 0-1.2-.55-1.2-1.2 0-.65.55-1.2 1.2-1.2.65 0 1.2.55 1.2 1.2 0 .65-.55 1.2-1.2 1.2z",
  tag: "M7.73 1.73C7.26 1.26 6.62 1 5.96 1H3.5C2.13 1 1 2.13 1 3.5v2.47c0 .66.27 1.3.73 1.77l6.06 6.06c.39.39 1.02.39 1.41 0l4.59-4.59a.996.996 0 0 0 0-1.41L7.73 1.73zM2.38 7.09c-.31-.3-.47-.7-.47-1.13V3.5c0-.88.72-1.59 1.59-1.59h2.47c.42 0 .83.16 1.13.47l6.14 6.13-4.73 4.73-6.13-6.15zM3.01 3h2v2H3V3h.01z",
  people: "M16 12.999c0 .439-.45 1-1 1H7.995c-.539 0-.994-.447-.995-.999H1c-.54 0-1-.561-1-1 0-2.634 3-4 3-4s.229-.409 0-1c-.841-.621-1.058-.59-1-3 .058-2.419 1.367-3 2.5-3s2.442.58 2.5 3c.058 2.41-.159 2.379-1 3-.229.59 0 1 0 1s1.549.711 2.42 2.088C9.196 9.369 10 8.999 10 8.999s.229-.409 0-1c-.841-.62-1.058-.59-1-3 .058-2.419 1.367-3 2.5-3s2.437.581 2.495 3c.059 2.41-.158 2.38-1 3-.229.59 0 1 0 1s3.005 1.366 3.005 4",
  bell: "M14 12v1H0v-1l.73-.58c.77-.77.81-2.55 1.19-4.42C2.69 3.23 6 2 6 2c0-.55.45-1 1-1s1 .45 1 1c0 0 3.39 1.23 4.16 5 .38 1.88.42 3.66 1.190 4.420l.66.58H14zm-7 4c1.110 0 2-.89 2-2H5c0 1.110.89 2 2 2z",
  plus: "M12 9H7v5H5V9H0V7h5V2h2v5h5v2z",
};

function JiraFavicon() {
  return (
    <svg viewBox="0 0 16 16" className="size-4" aria-hidden="true">
      <path d="M7.500 0H16v8.500a3.800 3.800 0 0 1-3.300-3.800V3.300h-1.400A3.800 3.800 0 0 1 7.500 0z" fill="#2684ff" />
      <path d="M3.800 3.800h8.500v8.500A3.800 3.800 0 0 1 9 8.500V7.100H7.600a3.800 3.800 0 0 1-3.800-3.300z" fill="#1a6fec" />
      <path d="M0 7.500h8.500V16a3.800 3.800 0 0 1-3.300-3.800v-1.400H3.800A3.800 3.800 0 0 1 0 7.500z" fill="#2684ff" />
    </svg>
  );
}

const browserTabs: { title: string; icon: ReactNode }[] = [
  { title: "APPM - Sprint - Agile Board - Jira", icon: <JiraFavicon /> },
  { title: "[APPM-688] FC Investor Portal - N", icon: <JiraFavicon /> },
  { title: "[HASCAI-9421] Planner Issue - Jira", icon: <JiraFavicon /> },
  {
    title: "Releases - Pipelines",
    icon: (
      <svg viewBox="0 0 16 16" className="size-4" fill="none" stroke="#0078d4" strokeWidth="2.400" aria-hidden="true">
        <path d="M1.500 5v6L8 15M1.500 5 10 2l4.500 2v8L4 13.500M4 5l6-3M6 0v4" />
      </svg>
    ),
  },
  {
    title: "Pipelines - Go",
    icon: (
      <svg viewBox="0 0 16 16" className="size-4" fill="none" stroke="#7b4fa3" strokeWidth="2.600" aria-hidden="true">
        <path d="M4 2l8 6-8 7V7" />
      </svg>
    ),
  },
];

const tabText = "ml-2 w-[175px] overflow-hidden whitespace-nowrap [mask-image:linear-gradient(to_right,black_86%,transparent)]";

function WorkspaceWindow() {
  return (
    <>
      <div className="flex h-6 shrink-0 items-center bg-white pl-[3px] pr-[18px] text-[11px] text-[#8a8a8a]">
        <WorkspacesIcon className="size-[15px]" />
        <span className="ml-[5px]">Amazon WorkSpaces</span>
        <div className="ml-auto flex items-center text-[#666]">
          <TabletModeIcon className="mr-[58px] h-3 w-4 text-[#4b4f66]" />
          <button aria-label="Minimize window" className="mr-[34px]"><Minus className="size-3" strokeWidth={1.5} /></button>
          <button aria-label="Restore window" className="mr-[34px]"><RestoreIcon className="size-[11px]" /></button>
          <button aria-label="Close window"><X className="size-[14px]" strokeWidth={1.3} /></button>
        </div>
      </div>
      <nav className="flex h-[21px] shrink-0 items-center gap-[18px] border-b border-[#ececec] bg-white pl-2 text-[13px] leading-4 text-[#9a9a9a]">
        <a href="#menu">Amazon WorkSpaces</a><a href="#menu">My WorkSpace</a><a href="#menu">Connection</a><a href="#menu">View</a>
      </nav>
      <div className="flex h-[34px] shrink-0 items-end bg-[#dee1e6] pl-2 text-[11px] text-[#3c4043]">
        {browserTabs.map((t) => (
          <div key={t.title} className="flex h-[34px] w-[239px] items-center pl-3">
            {t.icon}
            <span className={tabText}>{t.title}</span>
            <button aria-label="Close tab" className="ml-1.5"><X className="size-3" strokeWidth={3} /></button>
            <span className={t.title === "Pipelines - Go" ? "hidden" : "ml-auto h-5 w-px bg-[#888c90]"} />
          </div>
        ))}
        <div className="flex h-[34px] w-[240px] items-center rounded-t-lg bg-white pl-3">
          <Oct d={oct.github} className="text-[#1b1f23]" />
          <span className={tabText}>GCMGrosvenor/Gcm.Pub.InvMgrTrade</span>
          <button aria-label="Close tab" className="ml-1.5"><X className="size-3" strokeWidth={3} /></button>
        </div>
        <button aria-label="New tab" className="ml-[15px] self-center"><Plus className="size-[15px]" strokeWidth={2.4} /></button>
        <svg viewBox="0 0 92 17" className="ml-auto mr-1 h-[17px] w-[92px] self-start" fill="none" stroke="#73777c" aria-hidden="true">
          <path d="M.5 0v13a3.500 3.500 0 0 0 3.500 3.500h84a3.500 3.500 0 0 0 3.500-3.500V0M25.500 0v16M50.500 0v16" />
          <rect x="7.500" y="8.500" width="11" height="4" fill="#fff" /><rect x="32.500" y="5.500" width="8" height="8" fill="#fff" /><path d="M35.500 5V2.500h8v8H41M35.500 8.500h2v2h-2z" />
          <path d="M66 4h4l1.500 2L73 4h4l-3.500 4.500L77 13h-4l-1.500-2-1.500 2h-4l3.500-4.500z" fill="#fff" />
        </svg>
      </div>
      <div className="flex h-[37px] shrink-0 items-center border-b border-[#b8b8b8] bg-white pl-[13px] pr-4 text-[13px] text-[#5f6368]">
        <button aria-label="Back"><ArrowLeft className="size-[18px]" strokeWidth={2.3} /></button>
        <button aria-label="Forward" className="ml-[15px]"><ArrowRight className="size-[18px] text-[#bdc1c6]" strokeWidth={2.3} /></button>
        <button aria-label="Reload" className="mx-3.5"><RotateCw className="size-[17px]" strokeWidth={2.5} /></button>
        <div className="flex h-7 flex-1 items-center rounded-full bg-[#f1f3f4] pl-3 pr-[9px]">
          <svg viewBox="0 0 10 12" className="h-3 w-2.5" fill="#5f6368" aria-hidden="true"><path d="M0 4.500h10V12H0z" /><path d="M2.500 5V3a2.500 2.500 0 0 1 5 0v2" fill="none" stroke="#5f6368" strokeWidth="1.500" /></svg>
          <span className="ml-3">GitHub, Inc. [US]</span>
          <span className="ml-[9px] h-4 w-px bg-[#9aa0a6]" />
          <div role="textbox" aria-label="Address" className="ml-[9px] flex-1"><span className="text-[#202124]">github.com</span>/GCMGrosvenor/Gcm.Pub.InvMgrTradeExecutionWeb</div>
          <svg viewBox="0 0 24 24" className="size-[17px]" fill="none" stroke="currentColor" strokeWidth="2.200" aria-hidden="true">
            <path d="m12 2.500 2.800 6.700 7.200.6-5.500 4.700 1.700 7L12 17.700l-6.200 3.800 1.700-7L2 9.800l7.200-.6z" />
          </svg>
        </div>
        <svg viewBox="0 0 16 16" className="ml-3.5 size-4" aria-hidden="true"><circle cx="8" cy="8" r="7.500" fill="#666" /><circle cx="6.500" cy="7" r="4.300" fill="#e8e8e8" /></svg>
        <svg viewBox="0 0 16 16" className="ml-4 size-4" aria-hidden="true"><rect width="16" height="16" rx="1" fill="#777" /><path d="M5.500 4v8M11 4l-5 4 5 4" stroke="#fff" strokeWidth="1.500" fill="none" /></svg>
        <svg viewBox="0 0 16 16" className="ml-4 size-4" aria-hidden="true"><circle cx="8" cy="8" r="5.800" fill="none" stroke="#0a84d6" strokeWidth="4.200" /></svg>
        <span className="ml-3.5 h-4 w-px bg-[#c8cacc]" />
        <svg viewBox="0 0 20 20" className="ml-3 size-5" aria-hidden="true"><circle cx="10" cy="10" r="10" fill="#dcdcdc" /><circle cx="10" cy="6.500" r="3" fill="#9a9a9a" /><ellipse cx="10" cy="13.500" rx="6" ry="3" fill="#9a9a9a" /></svg>
        <svg viewBox="0 0 4 16" className="ml-[22px] mr-1 h-4 w-1" fill="#5f6368" aria-hidden="true"><circle cx="2" cy="2" r="1.800" /><circle cx="2" cy="8" r="1.800" /><circle cx="2" cy="14" r="1.800" /></svg>
      </div>
    </>
  );
}

function GitHubHeader() {
  return (
    <header className="flex h-16 shrink-0 items-center bg-[#24292e] pl-4 pr-4 text-[13px] font-semibold text-white">
      <a href="#home" aria-label="Homepage"><svg viewBox="0 0 16 16" className="size-8" fill="currentColor" aria-hidden="true"><path d={oct.github} /></svg></a>
      <div className="ml-4 flex h-7 w-[300px] items-center rounded-[3px] bg-[#404448] pl-2 pr-2">
        <input aria-label="Search or jump to" placeholder="Search or jump to..." className="min-w-0 flex-1 bg-transparent font-normal outline-none placeholder:text-[#a0a3a6]" />
        <span className="flex h-5 w-[19px] items-center justify-center rounded-[3px] border border-[#6d7175] text-[11px] font-normal text-[#a0a3a6]">/</span>
      </div>
      <nav className="ml-4 flex gap-4">
        <a href="#pulls">Pull requests</a><a href="#issues">Issues</a><a href="#marketplace">Marketplace</a><a href="#explore" className="ml-1">Explore</a>
      </nav>
      <div className="ml-auto flex items-center pt-1">
        <Oct d={oct.bell} w={14} />
        <Oct d={oct.plus} w={12} className="ml-[15px]" /><TriangleDown className="ml-1 h-1 w-2" />
        <svg viewBox="0 0 20 20" className="mb-1 ml-[15px] size-5" aria-hidden="true">
          <rect width="20" height="20" rx="3" fill="#f0f0f0" />
          <path d="M2 2h4v3H2zM14 2h4v3h-4zM8 1h4v6h6v6h-3v5h-3v-4H8v4H5v-5H2V7h6z" fill="#97e3b1" />
        </svg>
        <TriangleDown className="mb-1 ml-1 h-1 w-2" />
      </div>
    </header>
  );
}

function SocialButton({ icon, label, count, caret }: { icon: ReactNode; label: string; count: string; caret?: boolean }) {
  return (
    <div className="flex h-7 items-stretch text-[11px] font-semibold text-[#24292e]">
      <button className="flex items-center gap-1 rounded-l-[3px] border border-[#c9ccd0] bg-linear-to-b from-[#fafbfc] to-[#eff3f6] px-2.5">
        {icon}{label}{caret && <TriangleDown className="h-1 w-2" />}
      </button>
      <a href="#count" className="flex items-center rounded-r-[3px] border border-l-0 border-[#d1d4d8] bg-white px-2.5">{count}</a>
    </div>
  );
}

const repoTabs = [
  { label: "Issues", icon: oct.issue, w: 14, count: "0", cls: "w-[98px]" },
  { label: "Pull requests", icon: oct.pr, w: 12, count: "0", cls: "w-[140px]" },
  { label: "Projects", icon: oct.project, w: 15, count: "0", cls: "w-[113px]" },
  { label: "Wiki", icon: oct.book, w: 16, cls: "w-[72px]" },
  { label: "Security", icon: oct.shield, w: 14, cls: "w-[93px]" },
  { label: "Insights", icon: oct.graph, w: 16, cls: "w-[90px]" },
];

const stats = [
  { n: "862", t: "commits", icon: oct.history, w: 14 },
  { n: "5", t: "branches", icon: oct.branch, w: 10 },
  { n: "0", t: "releases", icon: oct.tag, w: 14 },
  { n: "10", t: "contributors", icon: oct.people, w: 16 },
];

const languages = [
  { c: "#178600", w: 706 }, { c: "#f1e05a", w: 152 }, { c: "#e34c26", w: 62 }, { c: "#563d7c", w: 16 },
  { c: "#012456", w: 16 }, { c: "#6f42ff", w: 14 }, { c: "#ededed", w: 8 },
];

const wip = "WIP - removing packages; updating db conn str;";
const migrated = "Migrated the code.";
const files: [string, string, string, boolean][] = [
  ["Build", wip, "2 months ago", true],
  ["ConfigurationManagement", "Converted gipms rename functionality to include mcg rename functional...", "6 years ago", true],
  ["Database", "LBTS - Updated DB changes", "last year", true],
  ["ServiceBusHost", wip, "2 months ago", true],
  ["Website", "APPM-634. Reverting changes from master", "6 days ago", true],
  [".gitignore", wip, "2 months ago", false],
  ["Directory.Build.props", migrated, "3 months ago", false],
  ["Directory.Build.targets", migrated, "3 months ago", false],
  ["Gcm.Pub.InvMgrTradeExecutionWe...", migrated, "3 months ago", false],
  ["GitVersion.yml", "Removed Build.targets file from website folder.", "3 months ago", false],
  ["azure-pipelines.json", "Including azure-pipelines.json", "2 months ago", false],
  ["azure-pipelines.yml", migrated, "3 months ago", false],
  ["global.json", "Including test projects.", "3 months ago", false],
];

const grayBtn = "flex h-7 items-center gap-1 rounded-[3px] border border-[#c9ccd0] bg-linear-to-b from-[#fafbfc] to-[#eff3f6] px-2.5 text-[11px] font-semibold text-[#24292e]";
const groupBtn = "flex h-7 items-center border-y border-r border-[#c9ccd0] bg-linear-to-b from-[#fafbfc] to-[#eff3f6] px-2.5 text-[12px] font-semibold text-[#24292e]";
const greenBtn = "flex h-7 items-center gap-1 rounded-[3px] border border-[#28923f] bg-linear-to-b from-[#34d058] to-[#28a745] px-2.5 text-[11px] font-semibold text-white";

function RepoPage() {
  return (
    <div className="flex min-h-0 flex-1 bg-white">
      <div className="min-w-0 flex-1 overflow-hidden">
        <GitHubHeader />
        <div className="border-b border-[#e1e4e8] bg-[#fafbfc] pt-6">
          <div className="mx-auto w-[980px]">
            <div className="flex h-7 items-center">
              <h1 className="flex items-center text-[17px] text-[#0366d6]">
                <Oct d={oct.lock} w={12} className="mr-1.5 text-[#8a8f95]" />
                <a href="#owner">GCMGrosvenor</a><span className="mx-[5px] text-[#586069]">/</span>
                <a href="#repo" className="font-semibold">Gcm.Pub.InvMgrTradeExecutionWeb</a>
                <span className="ml-1.5 mt-0.5 rounded-[2px] border border-[#d1d5da] px-1 text-[11px] leading-[17px] text-[#6a737d]">Private</span>
              </h1>
              <div className="ml-auto flex gap-2.5">
                <SocialButton icon={<Oct d={oct.eye} />} label="Watch" count="9" caret />
                <SocialButton icon={<Oct d={oct.star} w={14} />} label="Star" count="0" />
                <SocialButton icon={<Oct d={oct.fork} w={10} />} label="Fork" count="0" />
              </div>
            </div>
            <nav className="-mb-px mt-4 flex h-10 items-stretch text-[13px] text-[#586069]">
              <a href="#code" className="flex w-[77px] items-center gap-1 rounded-t-[3px] border border-b-0 border-t-[3px] border-[#e1e4e8] border-t-[#e36209] bg-white pl-3 text-[#24292e]">
                <Oct d={oct.code} w={14} />Code
              </a>
              {repoTabs.map((t, i) => (
                <a key={t.label} href="#tab" className={(i === 0 ? "ml-3 " : "") + "flex items-center gap-1 whitespace-nowrap pt-1 " + t.cls}>
                  <Oct d={t.icon} w={t.w} className="text-[#b3b8bd]" />
                  {t.label}
                  {t.count && <span className="rounded-full bg-[#e6e8eb] px-1 text-[12px] font-semibold leading-4">{t.count}</span>}
                </a>
              ))}
            </nav>
          </div>
        </div>
        <main className="mx-auto w-[980px] pt-[25px] text-[13px]">
          <p className="text-[15px] italic leading-6 text-[#666]">No description, website, or topics provided.</p>
          <div className="mt-[15px] overflow-hidden rounded-[3px] border border-[#dfe2e5]">
            <ul className="grid h-[41px] grid-cols-4 text-[#586069]">
              {stats.map((s) => (
                <li key={s.t} className="flex items-center justify-center gap-1">
                  <Oct d={s.icon} w={s.w} className="text-[#6a737d]" />
                  <span><b className="font-semibold text-[#24292e]">{s.n}</b> {s.t}</span>
                </li>
              ))}
            </ul>
            <div className="flex h-2 gap-px">
              {languages.map((l) => <span key={l.c} style={{ backgroundColor: l.c, flexGrow: l.w }} />)}
            </div>
          </div>
          <div className="mt-4 flex">
            <button className={grayBtn}><span><span className="font-normal text-[#586069]">Branch:</span> master</span><TriangleDown className="h-1 w-2" /></button>
            <button className={grayBtn + " ml-[7px]"}>New pull request</button>
            <div className="ml-auto flex">
              <button className={groupBtn + " rounded-l-[3px] border-l"}>Create new file</button>
              <button className={groupBtn}>Upload files</button>
              <button className={groupBtn + " rounded-r-[3px]"}>Find File</button>
            </div>
            <button className={greenBtn + " ml-2"}>Clone or download<TriangleDown className="h-1 w-2" /></button>
          </div>
          <div className="mt-2.5 flex h-[43px] items-center rounded-t-[3px] border border-[#c8e1ff] bg-[#f1f8ff] px-2.5 text-[12px] text-[#586069]">
            <svg viewBox="0 0 20 20" className="size-5" aria-hidden="true"><rect width="20" height="20" rx="3" fill="#f0f0f0" /><path d="M8 5h4v3H8zM2 15h7v3H2zM12 15h6v3h-6z" fill="#8fd9e0" /></svg>
            <span className="ml-1.5"><b className="font-semibold text-[#24292e]">aroychowdhury01</b> APPM-634. Reverting changes from master</span>
            <span className="ml-auto">Latest commit <a href="#commit" className="text-[11px] text-[#444d56] [font-family:'DejaVu_Sans_Mono',monospace]">d16a6ca</a> 6 days ago</span>
          </div>
          <table className="w-full table-fixed border-separate border-spacing-0 rounded-b-[3px] border border-t-0 border-[#dfe2e5]">
            <tbody>
              {files.map(([name, msg, age, dir], i) => (
                <tr key={name} className={i === 6 ? "h-[33px] bg-[#f6f8fa]" : "h-[33px]"}>
                  <td className={(i ? "border-t border-[#eaecef] " : "") + "w-[274px] whitespace-nowrap pl-2.5"}>
                    <span className="flex items-center">
                      <span className="w-[19px]"><Oct d={dir ? oct.dir : oct.file} w={dir ? 14 : 12} className="text-[#7c94b0]" /></span>
                      <a href="#file" className="text-[#0366d6]">{name}</a>
                    </span>
                  </td>
                  <td className={(i ? "border-t border-[#eaecef] " : "") + "whitespace-nowrap text-[#6a737d]"}>{msg}</td>
                  <td className={(i ? "border-t border-[#eaecef] " : "") + "w-[130px] pr-2.5 text-right text-[#6a737d]"}>{age}</td>
                </tr>
              ))}
            </tbody>
          </table>
          <div className="mt-2.5 flex h-[55px] items-center rounded-[3px] border border-[#b9cfe6] bg-[#dbedff] pl-4 pr-4 text-[#264c72]">
            Add a README with an overview of your project.
            <button className={greenBtn + " ml-auto"}>Add a README</button>
          </div>
        </main>
      </div>
      <div className="flex w-[17px] shrink-0 flex-col items-center bg-[#f1f1f1] pb-2 pt-2">
        <TriangleDown className="h-1 w-2 rotate-180 text-[#a3a3a3]" />
        <div className="mt-[5px] h-[711px] w-[13px] bg-[#c1c1c1]" />
        <TriangleDown className="mt-auto h-1 w-2 text-[#505050]" />
      </div>
    </div>
  );
}

function OldFolder() {
  return (
    <svg viewBox="0 0 36 32" className="h-8 w-9" aria-hidden="true">
      <path d="M3 3h9l2 2h18v20H3z" fill="#d8b65a" /><path d="M5 4h3v5H5zM12 4h3v5h-3z" fill="#3f9b47" /><path d="M20 4h3v5h-3z" fill="#d23c33" />
      <path d="M2 8h31v22H2z" fill="#f3e09a" /><path d="M7 31V20h21v11h-5v-6H12v6z" fill="#8fd0f0" />
    </svg>
  );
}

function OldOffice({ letter, color, className }: { letter: string; color: string; className: string }) {
  return (
    <svg viewBox="0 0 34 32" className={className} aria-hidden="true">
      <rect x="15" y="7" width="17" height="18" fill="#fff" stroke={color} strokeWidth="1.500" />
      {letter === "O" ? <path d="m19 12 5 6 7-10" fill="none" stroke={color} strokeWidth="2.500" /> : <path d="M18 11h13M18 15h13M18 19h13M25 8v16" stroke={color} strokeWidth="1.600" />}
      <path d="M2 5 20 1v30L2 27z" fill={color} />
      <text x="11" y="22" fontSize="16" fontWeight="700" textAnchor="middle" fill="#fff" fontFamily="Open Sans, sans-serif">{letter}</text>
    </svg>
  );
}

const glass = "from-[#c9d8ea] to-[#b3c7e0]";

const remoteItems: { label: string; icon: ReactNode; cls: string }[] = [
  { label: "Chrome", icon: <ChromeIcon className="size-[31px]" />, cls: "from-[#f4f7fb] to-[#d9e2ee]" },
  { label: "Explorer", icon: <OldFolder />, cls: glass },
  { label: "Outlook", icon: <OldOffice letter="O" color="#0f6cbd" className="size-8" />, cls: glass },
  {
    label: "Snipping Tool",
    icon: (
      <svg viewBox="0 0 32 32" className="size-8" fill="none" aria-hidden="true">
        <ellipse cx="13" cy="9" rx="10" ry="7.500" fill="#fbe9e9" stroke="#d83a3a" strokeWidth="2" />
        <path d="m10 5 12 18M20 6l-5 16" stroke="#7c8a99" strokeWidth="2.500" /><circle cx="14" cy="26" r="3.500" stroke="#2d7fc1" strokeWidth="2.500" /><circle cx="25" cy="25" r="3.500" stroke="#2d7fc1" strokeWidth="2.500" />
      </svg>
    ),
    cls: "from-[#eecdd1] to-[#d5545b]",
  },
  {
    label: "SQL tools",
    icon: (
      <svg viewBox="0 0 32 32" className="size-8" fill="none" aria-hidden="true">
        <path d="M14 3h14v11M3 18v10h10" stroke="#3c9a3c" strokeWidth="2" strokeDasharray="2 2" />
        <rect x="2" y="2" width="9" height="13" rx="2" fill="#e8b021" /><ellipse cx="6.500" cy="3.500" rx="4.500" ry="1.800" fill="#ffdb70" />
        <path d="m16 17 13 13" stroke="#5a6470" strokeWidth="2.600" /><path d="m28 17-12 13" stroke="#d7a033" strokeWidth="2.600" /><path d="M22 15h9l-2 6z" fill="#7c8794" />
      </svg>
    ),
    cls: glass,
  },
  { label: "Internet Explorer", icon: <InternetExplorerIcon className="size-8" />, cls: glass },
  { label: "Excel", icon: <OldOffice letter="X" color="#1e7145" className="size-8" />, cls: glass },
  { label: "Skype", icon: <SkypeIcon className="size-8" />, cls: glass },
  {
    label: "Visual Studio",
    icon: (
      <svg viewBox="0 0 32 32" className="size-8" aria-hidden="true"><rect width="32" height="32" fill="#68217a" /><path d="M22 5l5 2v18l-5 2L12 18l-5 4-2-1V11l2-1 5 4zM22 11l-6 5 6 5z" fill="#fff" fillRule="evenodd" /></svg>
    ),
    cls: glass,
  },
  { label: "Notepad++", icon: <NotepadIcon className="size-8" />, cls: glass },
  {
    label: "Disc tool",
    icon: (
      <svg viewBox="0 0 32 32" className="size-8" fill="none" aria-hidden="true">
        <circle cx="16" cy="16" r="12" stroke="#17181a" strokeWidth="7" /><circle cx="16" cy="16" r="8" fill="#cfd2d6" /><circle cx="16" cy="16" r="3" fill="#b48b42" />
        <path d="M3 14A13 13 0 0 1 15 2" stroke="#e02a23" strokeWidth="5" /><path d="M29 18a13 13 0 0 1-12 12" stroke="#2a6fd6" strokeWidth="5" />
      </svg>
    ),
    cls: glass,
  },
  { label: "Firefox", icon: <FirefoxIcon className="size-[31px]" />, cls: glass },
];

function RemoteTaskbar() {
  return (
    <div className="flex h-10 shrink-0 border-t border-[#4a5260] bg-[#a7bfdd] text-white">
      <button aria-label="Start" className="flex w-[60px] items-center bg-[#7f93ae] pl-2">
        <svg viewBox="0 0 36 36" className="size-9" aria-hidden="true">
          <circle cx="18" cy="18" r="17" fill="#1c5c94" stroke="#3c556e" /><ellipse cx="18" cy="11" rx="14" ry="9" fill="#6fa3c9" opacity=".6" /><ellipse cx="18" cy="29" rx="10" ry="6" fill="#35b5e8" opacity=".7" />
          <path d="M10 11c3-2 5-2 7 0v7c-2-2-4-2-7 0z" fill="#f0622d" /><path d="M18 11c3 2 5 2 8 0v7c-3 2-5 2-8 0z" fill="#8cc43c" /><path d="M10 19c3-2 5-2 7 0v7c-2-2-4-2-7 0z" fill="#3aa3e3" /><path d="M18 19c3 2 5 2 8 0v7c-3 2-5 2-8 0z" fill="#fbc62d" />
        </svg>
      </button>
      {remoteItems.map((r) => (
        <button key={r.label} aria-label={r.label} className={"mr-1 flex w-[58px] items-center justify-center rounded-[3px] border border-[#5f6f86] bg-linear-to-br shadow-[inset_0_0_0_1px_rgba(255,255,255,0.6)] " + r.cls}>
          {r.icon}
        </button>
      ))}
      <div className="ml-auto flex items-center bg-linear-to-r from-[#a7bfdd] to-[#8496ae] to-15% pl-12">
        <TriangleDown className="h-1.5 w-2.5 rotate-180" />
        <OldOffice letter="O" color="#0f6cbd" className="ml-4 size-[17px]" />
        <SkypeIcon className="ml-2 size-4" />
        <svg viewBox="0 0 16 16" className="ml-2 size-4" fill="#5d6b80" stroke="#fff" aria-hidden="true"><path d="M5 4.500h10v7H5zM10 12v2M6 14.500h8M1.500 1v3h4V1M3.500 4v10" /></svg>
        <div className="ml-3.5 w-[66px] whitespace-nowrap text-center text-[11px] leading-[17px]"><p>2:21 PM</p><p>08/29/2019</p></div>
        <span className="ml-2 h-full w-[15px] border border-[#4c596b] bg-linear-to-b from-[#6c7c92] to-[#8c9db5]" />
      </div>
    </div>
  );
}

function SecondaryTaskbar() {
  return (
    <footer className="flex h-10 shrink-0 bg-[#060b14] text-[11px] text-white">
      <button aria-label="Start" className="flex w-[50px] items-center justify-center"><Windows10Logo className="size-[21px]" /></button>
      {taskItems.map((t) => (
        <button key={t.label} aria-label={t.label} className={t.active ? "flex w-12 flex-col items-center bg-[#3a3e47]" : "flex w-[49px] flex-col items-center"}>
          <span className="flex flex-1 items-center pt-0.5">{t.draw("size-[23px]")}</span>
          <span className={t.active ? "h-0.5 w-full bg-[#76b9ed]" : t.open ? "h-0.5 w-10 bg-[#76b9ed]" : "h-0.5"} />
        </button>
      ))}
      <div className="ml-auto mr-1 flex w-[62px] flex-col justify-center whitespace-nowrap text-center leading-[18px]"><p>14:21</p><p>29-08-2019</p></div>
    </footer>
  );
}

export default function App() {
  return (
    <div className="flex h-screen w-full overflow-hidden [font-family:'Open_Sans',sans-serif]">
      <div className="flex min-w-0 flex-1 flex-col">
        <FirefoxTitleBar />
        <FirefoxToolbar />
        <CandidatePage />
        <PrimaryTaskbar />
      </div>
      <div className="flex min-w-0 flex-1 flex-col">
        <WorkspaceWindow />
        <RepoPage />
        <RemoteTaskbar />
        <SecondaryTaskbar />
      </div>
    </div>
  );
}
